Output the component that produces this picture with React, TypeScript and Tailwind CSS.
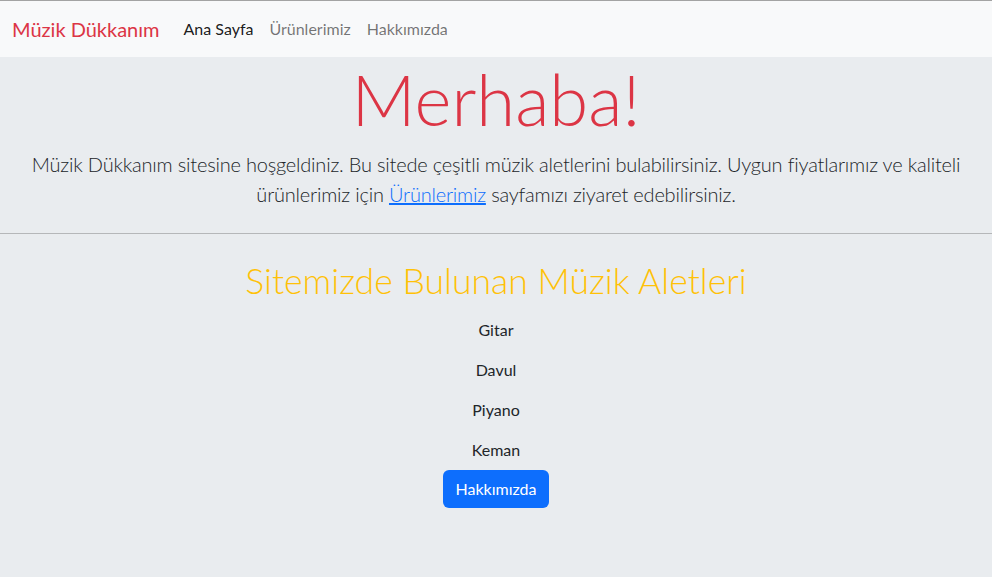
export default function App() {
  const items = ['Gitar', 'Davul', 'Piyano', 'Keman']

  return (
    <div className="min-h-[577px] bg-[#e9ecef] text-[#212529] font-['Lato',sans-serif] border-t border-[#a3a3a3]">
      <nav className="bg-[#f8f9fa] h-[56px] flex items-center px-3">
        <a className="text-[20px] text-[#dc3545] mr-6">Müzik Dükkanım</a>
        <div className="flex items-center gap-4 text-[16px]">
          <a className="text-black/90">Ana Sayfa</a>
          <a className="text-black/55">Ürünlerimiz</a>
          <a className="text-black/55">Hakkımızda</a>
        </div>
      </nav>

      <section className="text-center px-3">
        <h1 className="text-[70.6px] leading-[1.2] font-light text-[#dc3545]">Merhaba!</h1>
        <p className="text-[20px] leading-[30px] font-light tracking-[-0.2px] mt-[7px]">
          Müzik Dükkanım sitesine hoşgeldiniz. Bu sitede çeşitli müzik aletlerini bulabilirsiniz. Uygun fiyatlarımız ve kaliteli ürünlerimiz için{' '}
          <a className="text-[#0d6efd] underline">Ürünlerimiz</a> sayfamızı ziyaret edebilirsiniz.
        </p>
      </section>

      <hr className="mt-6 border-t border-[#b5b7b9]" />

      <section className="flex flex-col items-center pt-[26px]">
        <h2 className="text-[35.6px] leading-[1.2] font-light text-[#ffc107]">Sitemizde Bulunan Müzik Aletleri</h2>
        <ul className="flex flex-col items-center mt-2 text-[16px]">
          {items.map((item) => (
            <li key={item} className="h-10 flex items-center">{item}</li>
          ))}
        </ul>
        <button className="bg-[#0d6efd] text-white text-[16px] px-3 h-[38px] rounded-[6px]">Hakkımızda</button>
      </section>
    </div>
  )
}
